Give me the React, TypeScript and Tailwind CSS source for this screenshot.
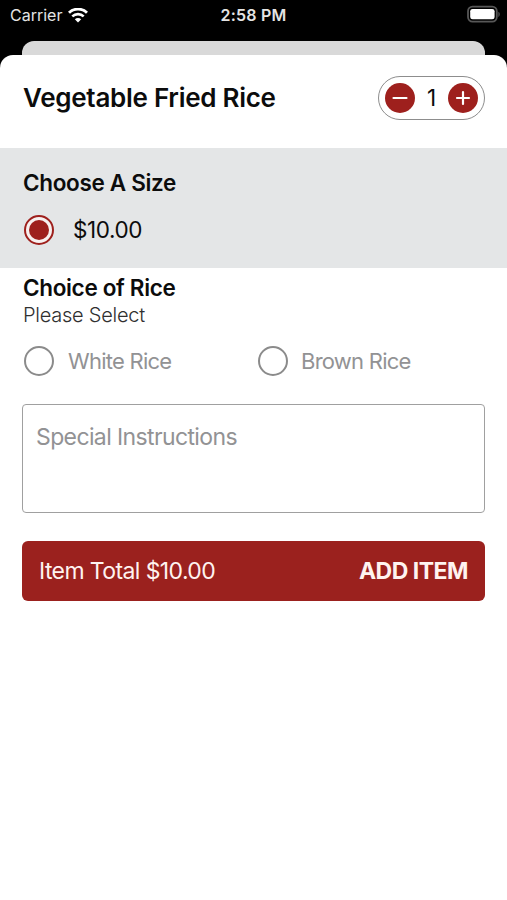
import type { ReactNode } from "react";

function WifiIcon() {
  return (
    <svg className="ml-[6px] h-[15px] w-[20px]" viewBox="0 0 20 15" fill="none" stroke="#fff">
      <path d="M1 4.8C6-.1 14-.1 19 4.8" strokeWidth="2.9" />
      <path d="M4.3 8.4c3.2-3.1 8.2-3.1 11.4 0" strokeWidth="2.6" />
      <path d="M10 14.5 6.8 11.3c1.9-1.7 4.5-1.7 6.4 0z" fill="#fff" stroke="none" />
    </svg>
  );
}

function BatteryIcon() {
  return (
    <svg className="h-[18px] w-[34px]" viewBox="0 0 34 18" fill="none">
      <rect x="1" y="1.6" width="28.8" height="15" rx="4.6" stroke="#575757" strokeWidth="1.8" />
      <rect x="3.2" y="3.9" width="24.4" height="10.4" rx="2.4" fill="#fff" />
      <path d="M31.4 6.8c1.8.8 1.8 4.3 0 5.1z" fill="#575757" />
    </svg>
  );
}

function RoundButton({ plus = false }: { plus?: boolean }) {
  return (
    <button className="size-[30px] rounded-full bg-[#9e201d]" aria-label={plus ? "Increase" : "Decrease"}>
      <svg viewBox="0 0 30 30" className="size-[30px]" stroke="#fff" strokeWidth="2.2" strokeLinecap="round">
        <path d={plus ? "M9 15h12M15 9v12" : "M8.5 15h13"} />
      </svg>
    </button>
  );
}

function RiceOption({ children }: { children: ReactNode }) {
  return (
    <div className="flex w-[234px] shrink-0 items-center">
      <span className="size-[30px] rounded-full border-2 border-[#8b8b8b]" />
      {children}
    </div>
  );
}

export default function App() {
  return (
    <div className="h-[900px] w-[507px] overflow-hidden bg-white font-['Inter','Liberation_Sans',sans-serif] text-[#0c0c0c]">
      <div className="flex h-[68px] flex-col bg-black">
        <div className="grid h-[41px] grid-cols-3 items-start pt-[5px] text-[16px] leading-5 text-[#e4e4e4]">
          <div className="flex items-center pl-[10px]">
            <span>Carrier</span>
            <WifiIcon />
          </div>
          <span className="text-center font-semibold tracking-[0.2px]">2:58 PM</span>
          <div className="flex justify-end pr-[6px]"><BatteryIcon /></div>
        </div>
        <div className="mx-[22px] h-[14px] shrink-0 rounded-t-[12px] bg-[#d9d9d9]" />
        <div className="h-[13px] shrink-0 rounded-t-[13px] bg-white" />
      </div>

      <header className="flex h-[80px] items-start justify-between pr-[22px] pl-[23px]">
        <h1 className="pt-[14px] text-[26px] leading-8 font-semibold tracking-[-0.27px] whitespace-nowrap">Vegetable Fried Rice</h1>
        <div className="mt-[8px] flex h-[44px] w-[107px] items-center justify-between rounded-full border-[1.5px] border-[#8d8d8d] px-[6px]">
          <RoundButton />
          <span className="text-[22.5px] leading-7">1</span>
          <RoundButton plus />
        </div>
      </header>

      <section className="h-[120px] bg-[#e4e6e7] pt-[20px] pl-[23px]">
        <h2 className="text-[22.5px] leading-[30px] font-semibold tracking-[-0.33px]">Choose A Size</h2>
        <div className="mt-[17px] flex items-center pl-[1px]">
          <span className="flex size-[30px] items-center justify-center rounded-full border-2 border-[#9e201d] bg-[#f7f0ef]">
            <span className="size-[20px] rounded-full bg-[#9e201d]" />
          </span>
          <span className="ml-[19px] text-[22.5px] leading-[30px] tracking-[-0.4px]">$10.00</span>
        </div>
      </section>

      <section className="px-[22px]">
        <h2 className="pt-[5px] pl-[1px] text-[22.5px] leading-[30px] font-semibold tracking-[-0.33px]">Choice of Rice</h2>
        <p className="pl-[1px] text-[20px] leading-6 font-light tracking-[-0.25px] text-[#303030]">Please Select</p>
        <div className="mt-[19px] flex pl-[2px] text-[22px] leading-[30px] text-[#929294]">
          <RiceOption><span className="ml-[14px] tracking-[-0.75px]">White Rice</span></RiceOption>
          <RiceOption><span className="ml-[13px] tracking-[-0.75px]">Brown Rice</span></RiceOption>
        </div>
        <div className="mt-[28px] h-[109px] rounded-[4px] border-[1.5px] border-[#a0a0a0] pt-[17px] pl-[13px] text-[23px] leading-[30px] text-[#929294]">
          <span className="tracking-[-0.62px]">Special Instructions</span>
        </div>
        <button className="mt-[28px] flex h-[60px] w-full items-center justify-between rounded-[6px] bg-[#9b211e] px-[17px] text-[23px] leading-[30px] text-[#fff3f0]">
          <span className="tracking-[-0.6px]">Item Total $10.00</span>
          <span className="font-bold tracking-[-0.5px]">ADD ITEM</span>
        </button>
      </section>
    </div>
  );
}
